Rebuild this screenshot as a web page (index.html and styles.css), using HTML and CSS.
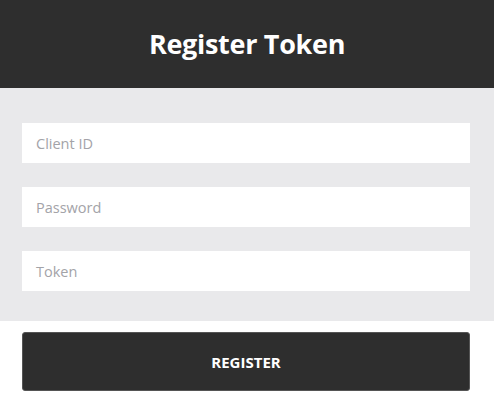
FILE: index.html
```html
<!DOCTYPE html>
<html>
<head>
<meta charset="utf-8">
<link rel="stylesheet" href="styles.css">
</head>
<body>
<header class="header"><h1 class="title">Register Token</h1></header>
<section class="panel">
  <div class="field">Client ID</div>
  <div class="field">Password</div>
  <div class="field">Token</div>
</section>
<div class="actions">
  <button class="btn">REGISTER</button>
</div>
</body>
</html>
```
FILE: styles.css
```css
html, body { margin: 0; padding: 0; background: #fff; }
body { font-family: "Open Sans", "Noto Sans", sans-serif; width: 494px; }
.header { height: 88px; background: #2e2e2e; display: flex; align-items: center; justify-content: center; }
.title { margin: 0 0 2px; color: #fff; font-size: 27px; font-weight: 700; letter-spacing: -0.3px; }
.panel { background: #e9e9eb; padding: 35px 24px 30px 22px; display: flex; flex-direction: column; gap: 24px; }
.field { height: 40px; background: #fff; box-sizing: border-box; padding-left: 14px; display: flex; align-items: center; color: #a3a3a8; font-size: 14.5px; }
.actions { padding: 11px 24px 0 22px; }
.btn { width: 100%; height: 59px; background: #2e2e2e; border: 1px solid #555; border-radius: 3px; color: #fff; font-family: inherit; font-weight: 700; font-size: 15px; letter-spacing: 0; }
```
